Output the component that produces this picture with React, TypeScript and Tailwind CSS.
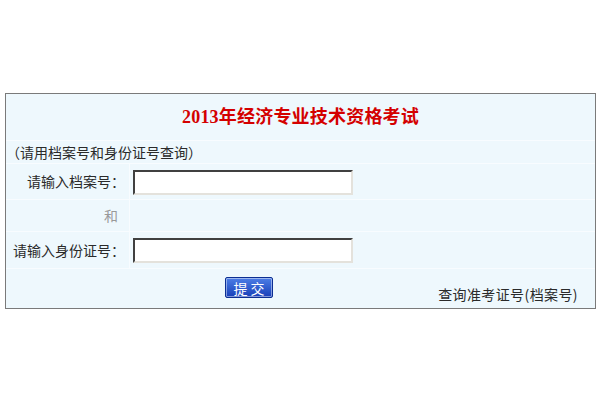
import React from "react";

const cjk = { fontFamily: '"Noto Sans CJK SC", "Liberation Sans", sans-serif' };
const titleFont = { fontFamily: '"Liberation Serif", "Noto Sans CJK SC", serif' };

function Input() {
  return (
    <input
      type="text"
      className="w-[220px] h-[25px] bg-white border-2 border-t-[#404040] border-l-[#404040] border-b-[#e4e2dc] border-r-[#e4e2dc] outline-none"
    />
  );
}

export default function App() {
  return (
    <div className="w-[600px] h-[400px] bg-white pt-[93px] pl-[5px]" style={cjk}>
      <div className="w-[591px] h-[216px] border border-[#7a7a7a] bg-[#eef8fd] flex flex-col text-[14px] text-[#2a2a2a]">
        <div className="h-[47px] flex items-center justify-center border-b border-[#f8fcff]">
          <span className="text-[18px] font-bold text-[#d40000] leading-none tracking-[0.2px]" style={titleFont}>
            2013年经济专业技术资格考试
          </span>
        </div>
        <div className="h-[23px] flex items-center border-b border-[#f8fcff]">
          <span className="leading-none">（请用档案号和身份证号查询）</span>
        </div>
        <div className="h-[36px] flex border-b border-[#f8fcff]">
          <div className="w-[124px] flex items-center justify-end pr-[4px] border-r border-[#f8fcff]">请输入档案号：</div>
          <div className="flex items-center pl-[3px] pt-[1px]"><Input /></div>
        </div>
        <div className="h-[32px] flex border-b border-[#f8fcff]">
          <div className="w-[124px] flex items-center justify-end pr-[11px] border-r border-[#f8fcff] text-[#999]">和</div>
          <div className="flex-1" />
        </div>
        <div className="h-[37px] flex border-b border-[#f8fcff]">
          <div className="w-[124px] flex items-center justify-end pr-[4px] border-r border-[#f8fcff]">请输入身份证号：</div>
          <div className="flex items-center pl-[3px] pt-[1px]"><Input /></div>
        </div>
        <div className="flex-1 flex items-start pt-[8px]">
          <button
            className="ml-[219px] w-[48px] h-[21px] border border-[#0c2f93] rounded-[2px] bg-gradient-to-b from-[#4d7ee6] to-[#1a3eb8] text-white text-[14px] leading-none tracking-[3px] pl-[3px] shadow-[inset_0_0_0_1px_rgba(255,255,255,0.45)]"
          >
            提交
          </button>
          <div className="flex-1" />
          <span className="mr-[17px] mt-[10px] leading-none tracking-[0.4px]">查询准考证号(档案号)</span>
        </div>
      </div>
    </div>
  );
}
